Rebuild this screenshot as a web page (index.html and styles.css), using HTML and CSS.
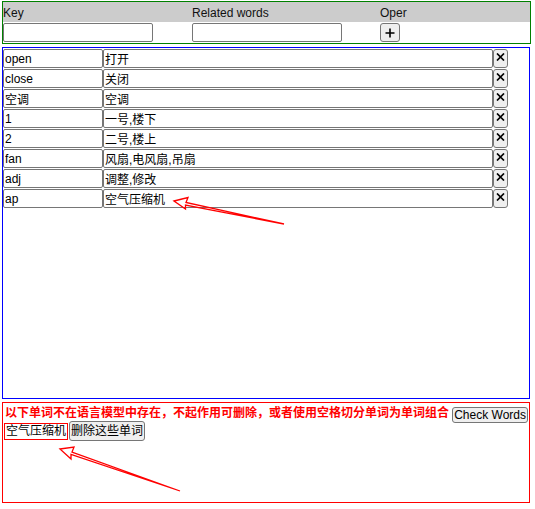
FILE: index.html
```html
<!DOCTYPE html>
<html>
<head>
<meta charset="utf-8">
<link rel="stylesheet" href="styles.css">
</head>
<body>
<div class="page">
  <div class="head">
    <div class="hrow"><div>Key</div><div>Related words</div><div>Oper</div></div>
    <div class="irow">
      <div><input class="hin"></div>
      <div><input class="hin"></div>
      <div><button class="plus"><svg width="10" height="10" viewBox="0 0 10 10"><path d="M5 0.5V9.5M0.5 5H9.5" stroke="#000" stroke-width="1.6" fill="none"/></svg></button></div>
    </div>
  </div>
  <div class="list">
    <div class="row"><input class="k" value="open"><input class="v" value="打开"><button class="del"><svg width="9" height="8" viewBox="0 0 9 8"><path d="M1 0.5L8 7.5M8 0.5L1 7.5" stroke="#000" stroke-width="1.7" fill="none"/></svg></button></div>
    <div class="row"><input class="k" value="close"><input class="v" value="关闭"><button class="del"><svg width="9" height="8" viewBox="0 0 9 8"><path d="M1 0.5L8 7.5M8 0.5L1 7.5" stroke="#000" stroke-width="1.7" fill="none"/></svg></button></div>
    <div class="row"><input class="k" value="空调"><input class="v" value="空调"><button class="del"><svg width="9" height="8" viewBox="0 0 9 8"><path d="M1 0.5L8 7.5M8 0.5L1 7.5" stroke="#000" stroke-width="1.7" fill="none"/></svg></button></div>
    <div class="row"><input class="k" value="1"><input class="v" value="一号,楼下"><button class="del"><svg width="9" height="8" viewBox="0 0 9 8"><path d="M1 0.5L8 7.5M8 0.5L1 7.5" stroke="#000" stroke-width="1.7" fill="none"/></svg></button></div>
    <div class="row"><input class="k" value="2"><input class="v" value="二号,楼上"><button class="del"><svg width="9" height="8" viewBox="0 0 9 8"><path d="M1 0.5L8 7.5M8 0.5L1 7.5" stroke="#000" stroke-width="1.7" fill="none"/></svg></button></div>
    <div class="row"><input class="k" value="fan"><input class="v" value="风扇,电风扇,吊扇"><button class="del"><svg width="9" height="8" viewBox="0 0 9 8"><path d="M1 0.5L8 7.5M8 0.5L1 7.5" stroke="#000" stroke-width="1.7" fill="none"/></svg></button></div>
    <div class="row"><input class="k" value="adj"><input class="v" value="调整,修改"><button class="del"><svg width="9" height="8" viewBox="0 0 9 8"><path d="M1 0.5L8 7.5M8 0.5L1 7.5" stroke="#000" stroke-width="1.7" fill="none"/></svg></button></div>
    <div class="row"><input class="k" value="ap"><input class="v" value="空气压缩机"><button class="del"><svg width="9" height="8" viewBox="0 0 9 8"><path d="M1 0.5L8 7.5M8 0.5L1 7.5" stroke="#000" stroke-width="1.7" fill="none"/></svg></button></div>
  </div>
  <div class="check">
    <div class="crow1"><span class="msg">以下单词不在语言模型中存在，不起作用可删除，或者使用空格切分单词为单词组合</span><button class="cw">Check Words</button></div>
    <div class="crow2"><span class="bad">空气压缩机</span><button class="rm">删除这些单词</button></div>
  </div>
  <svg class="arrows" width="535" height="509" viewBox="0 0 535 509">
    <polygon points="174,201 188,197.5 186,202.5 284,224 185.5,205 185.5,209" fill="none" stroke="#f00" stroke-width="1.3" stroke-linejoin="miter"/>
    <polygon points="60,449 74,447 72,452 180,491 71,454.5 71,459" fill="none" stroke="#f00" stroke-width="1.3" stroke-linejoin="miter"/>
  </svg>
</div>
</body>
</html>
```

FILE: styles.css
```css
html, body {
  margin: 0;
  padding: 0;
  background: #fff;
}
body {
  font-family: "Liberation Sans", "Noto Sans CJK SC", sans-serif;
  font-size: 12px;
  color: #000;
}
.page {
  position: relative;
  width: 535px;
  height: 509px;
  box-sizing: border-box;
  padding: 1px 0 0 2px;
}
.head {
  width: 529px;
  box-sizing: border-box;
  border: 1px solid #008000;
}
.hrow {
  display: grid;
  grid-template-columns: 189px 188px 1fr;
  height: 20px;
  box-sizing: border-box;
  padding-top: 2px;
  align-items: center;
  background: #cccccc;
  color: #111;
}
.irow {
  display: grid;
  grid-template-columns: 189px 188px 1fr;
  height: 21px;
  box-sizing: border-box;
  padding-top: 1px;
}
input, button {
  font-family: "Liberation Sans", "Noto Sans CJK SC", sans-serif;
  font-size: 12px;
  margin: 0;
  box-sizing: border-box;
  color: #000;
}
input {
  display: block;
  height: 19px;
  border: 1px solid #767676;
  border-radius: 2px;
  padding: 0 1px;
  background: #fff;
}
button {
  border: 1px solid #767676;
  border-radius: 3px;
  background: #efefef;
  padding: 0 1px;
  line-height: 14px;
  white-space: nowrap;
  flex-shrink: 0;
}
.hin {
  width: 150px;
}
.plus {
  width: 20px;
  height: 19px;
  display: flex;
  align-items: center;
  justify-content: center;
  padding: 0;
}
.list {
  margin-top: 3px;
  width: 528px;
  height: 352px;
  box-sizing: border-box;
  border: 1px solid #0000ff;
  padding-top: 1px;
  display: flex;
  flex-direction: column;
  gap: 1px;
}
.row {
  display: flex;
  height: 19px;
}
.k {
  width: 100px;
}
.v {
  width: 390px;
}
.del {
  width: 15px;
  height: 19px;
  padding: 3px 0 0 0;
  display: flex;
  justify-content: center;
  align-items: flex-start;
}
.check {
  margin-top: 3px;
  width: 528px;
  height: 101px;
  box-sizing: border-box;
  border: 1px solid #ff0000;
  padding: 0 1px;
}
.crow1 {
  display: flex;
  justify-content: space-between;
  align-items: flex-start;
  height: 18px;
  box-sizing: border-box;
  padding-top: 2px;
}
.msg {
  color: #ff0000;
  font-weight: bold;
  line-height: 16px;
  white-space: nowrap;
  padding-left: 1px;
}
.cw {
  margin-top: 2px;
  height: 16px;
}
.crow2 {
  display: flex;
  align-items: center;
  gap: 1px;
  height: 20px;
}
.bad {
  border: 1px solid #ff0000;
  padding: 0 1px;
  line-height: 15px;
}
.rm {
  height: 20px;
}
.arrows {
  position: absolute;
  top: 0;
  left: 0;
  pointer-events: none;
}
```
